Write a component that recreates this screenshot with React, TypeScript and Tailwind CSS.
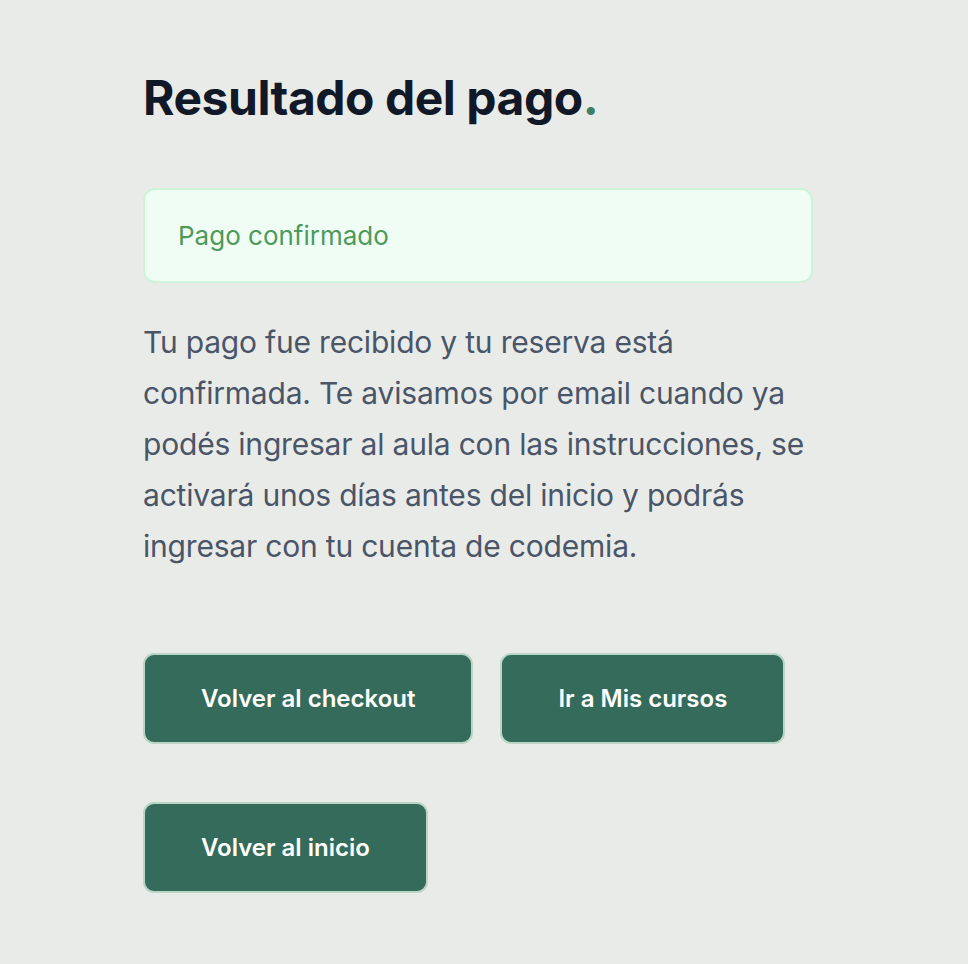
const font = { fontFamily: '"Inter", "Noto Sans", sans-serif' };

function ActionButton({ children }: { children: React.ReactNode }) {
  return (
    <button className="h-[91px] px-[56px] rounded-[11px] bg-[#356b5a] border-2 border-[#b9d5c6] text-white text-[24px] font-semibold cursor-pointer">
      {children}
    </button>
  );
}

export default function App() {
  return (
    <div className="min-h-screen bg-[#e9ebe8]" style={font}>
      <div className="w-[670px] ml-[143px] pt-[70px] pb-[60px]">
        <h1 className="text-[48px] leading-[56px] font-bold tracking-[-0.01em] text-[#111827]">
          Resultado del pago<span className="text-[#3f7f63]">.</span>
        </h1>

        <div className="mt-[62px] h-[95px] flex items-center px-[33px] rounded-xl bg-[#f0fdf4] border-2 border-[#cdf4d8]">
          <span className="text-[26px] leading-[32px] text-[#4d9a5b]">Pago confirmado</span>
        </div>

        <p className="mt-[34px] text-[30px] leading-[51px] tracking-[-0.2px] text-[#4a5568]">
          Tu pago fue recibido y tu reserva está confirmada. Te avisamos por email cuando ya podés
          ingresar al aula con las instrucciones, se activará unos días antes del inicio y podrás
          ingresar con tu cuenta de codemia.
        </p>

        <div className="mt-[81px] flex flex-wrap gap-x-[27px] gap-y-[58px]">
          <ActionButton>Volver al checkout</ActionButton>
          <ActionButton>Ir a Mis cursos</ActionButton>
          <ActionButton>Volver al inicio</ActionButton>
        </div>
      </div>
    </div>
  );
}
